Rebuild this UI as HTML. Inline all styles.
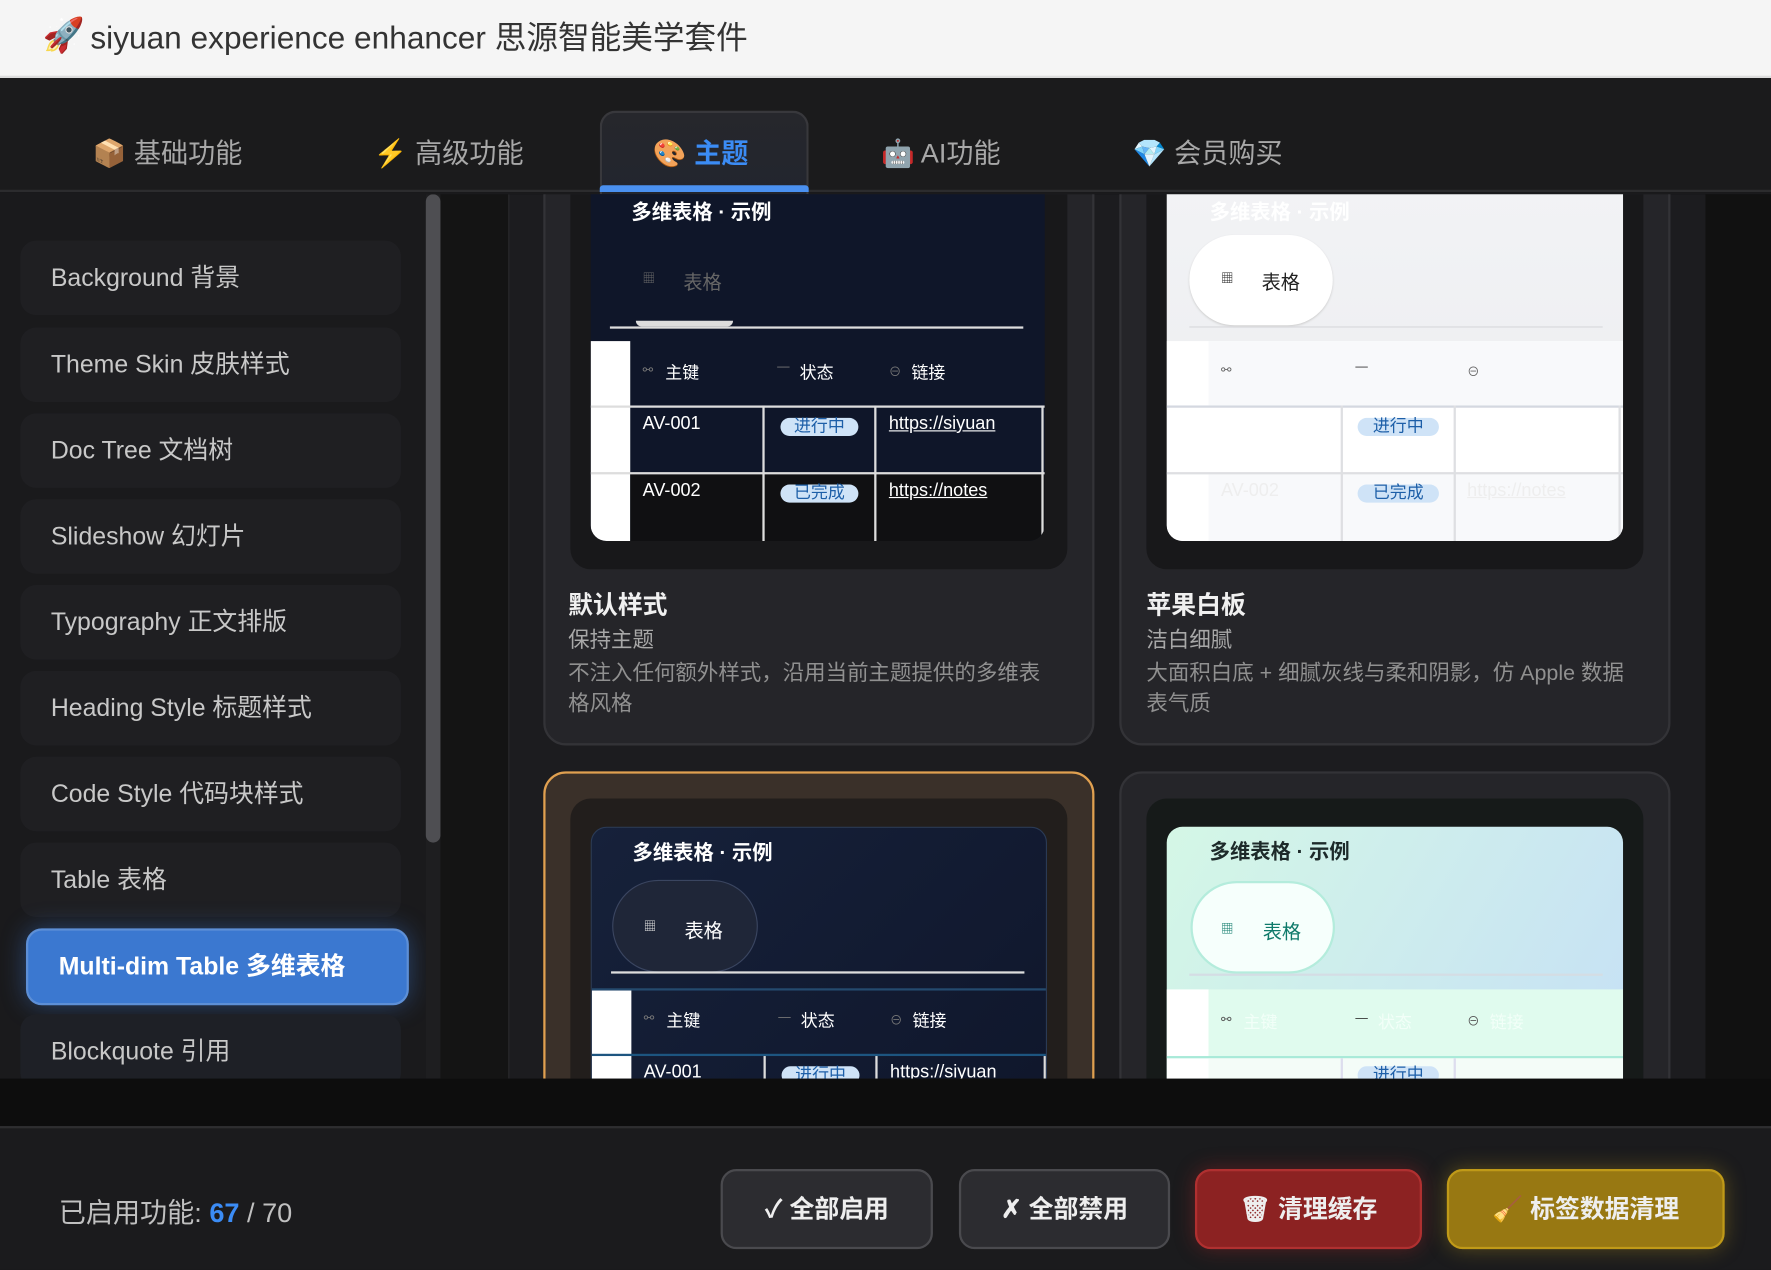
<!DOCTYPE html>
<html><head><meta charset="utf-8"><style>
*{box-sizing:border-box;margin:0;padding:0}
html,body{width:1771px;height:1269px;overflow:hidden;background:#1a1a1c}
body{font-family:"Liberation Sans","Noto Sans CJK SC",sans-serif}
#s{position:absolute;left:0;top:0;width:1568px;height:1124px;transform:scale(1.12946);transform-origin:0 0;background:#1a1a1c}
.a{position:absolute}
.hdr{left:0;top:0;width:1568px;height:69px;background:#f5f5f5;border-bottom:2px solid #ddd}
.tabs{left:0;top:70px;width:1568px;height:100px;background:#1b1b1c;border-bottom:2px solid #2c2c2e}
.tab{position:absolute;top:116px;font-size:24px;color:#a8a8a8;white-space:nowrap}
.side{left:0;top:172px;width:390px;height:783px;background:#1a1a1c;overflow:hidden}
.it{position:absolute;left:18px;width:337px;height:66px;border-radius:14px;background:#1f1f22;color:#c8c8c8;font-size:22px;padding-left:27px;line-height:66px;white-space:nowrap}
.main{left:390px;top:172px;width:1178px;height:783px;overflow:hidden;background:#141414}
.card{position:absolute;border-radius:20px;background:#252529;border:2px solid #333337}
.frame{position:absolute;border-radius:18px;background:#18181a}
.pv{position:absolute;overflow:hidden;border-radius:14px}
.t{position:absolute;white-space:nowrap}
.pill{position:absolute;height:16px;border-radius:8px;background:#cfe3f7;color:#1d5fa8;font-size:15px;line-height:16px;text-align:center}
</style></head><body><div id="s">
<div class="a hdr"></div>
<div class="a" style="left:38px;top:14px;font-size:30px">🚀</div>
<div class="a" style="left:80px;top:12px;font-size:28px;color:#333">siyuan experience enhancer 思源智能美学套件</div>

<div class="a tabs"></div>
<div class="a" style="left:531px;top:98px;width:185px;height:74px;border-radius:14px 14px 0 0;background:linear-gradient(#26272c,#22252e);border:2px solid #38383c;border-bottom:none"></div>
<div class="a" style="left:531px;top:164px;width:185px;height:6px;background:#4a90f0;border-radius:3px 3px 0 0"></div>
<div class="tab" style="left:82px">📦 基础功能</div>
<div class="tab" style="left:331px">⚡ 高级功能</div>
<div class="tab" style="left:578px;color:#3b8cf5;font-weight:bold">🎨 主题</div>
<div class="tab" style="left:780px">🤖 AI功能</div>
<div class="tab" style="left:1003px">💎 会员购买</div>

<div class="a side">
<div class="it" style="top:41px">Background 背景</div>
<div class="it" style="top:118px">Theme Skin 皮肤样式</div>
<div class="it" style="top:194px">Doc Tree 文档树</div>
<div class="it" style="top:270px">Slideshow 幻灯片</div>
<div class="it" style="top:346px">Typography 正文排版</div>
<div class="it" style="top:422px">Heading Style 标题样式</div>
<div class="it" style="top:498px">Code Style 代码块样式</div>
<div class="it" style="top:574px">Table 表格</div>
<div class="it" style="top:650px;left:23px;width:339px;height:68px;background:#3b78d0;border:2px solid #5d8fd6;color:#fff;font-weight:bold;line-height:64px;box-shadow:0 0 22px rgba(60,120,210,.45)">Multi-dim Table 多维表格</div>
<div class="it" style="top:726px;background:#1e2026">Blockquote 引用</div>
<div class="a" style="left:377px;top:0;width:13px;height:783px;background:#1e1e20"></div>
<div class="a" style="left:377px;top:0;width:13px;height:574px;border-radius:7px;background:#4e4e52"></div>
</div>

<div class="a main">
 <div class="a" style="left:60px;top:0;width:1060px;height:783px;background:#1c1c1f;border-left:1px solid #2a2a2c"></div>
 <!-- card1 -->
 <div class="card" style="left:91px;top:-60px;width:488px;height:548px">
  <div class="frame" style="left:22px;top:0;width:440px;height:390px">
   <div class="pv" style="left:18px;top:0;width:402px;height:365px;background:#0f1629;border-radius:0 0 14px 14px">
    <div class="t" style="left:36px;top:60px;font-size:18px;font-weight:bold;color:#fff">多维表格 · 示例</div>
    <div class="t" style="left:46px;top:124px;font-size:11px;color:#666">▦</div>
    <div class="t" style="left:82px;top:122px;font-size:17px;color:#666">表格</div>
    <div class="a" style="left:40px;top:170px;width:86px;height:5px;background:#ddd;border-radius:0 0 40px 40px"></div>
    <div class="a" style="left:17px;top:175px;width:366px;height:2px;background:#ddd"></div>
    <div class="a" style="left:0;top:188px;width:35px;height:177px;background:#fff"></div>
    <div class="t" style="left:46px;top:207px;font-size:11px;color:#777">⚯</div><div class="t" style="left:66px;top:205px;font-size:15px;color:#fff">主键</div>
    <div class="t" style="left:165px;top:205px;font-size:11px;color:#777">—</div><div class="t" style="left:185px;top:205px;font-size:15px;color:#fff">状态</div>
    <div class="t" style="left:264px;top:207px;font-size:11px;color:#777">⊖</div><div class="t" style="left:284px;top:205px;font-size:15px;color:#fff">链接</div>
    <div class="a" style="left:0;top:245px;width:402px;height:2px;background:#ddd"></div>
    <div class="a" style="left:35px;top:304px;width:367px;height:61px;background:#101012"></div>
    <div class="a" style="left:0;top:304px;width:402px;height:2px;background:#ddd"></div>
    <div class="a" style="left:152px;top:245px;width:2px;height:120px;background:#ddd"></div>
    <div class="a" style="left:251px;top:245px;width:2px;height:120px;background:#ddd"></div>
    <div class="a" style="left:399px;top:245px;width:2px;height:120px;background:#ddd"></div>
    <div class="t" style="left:46px;top:253px;font-size:16px;color:#fff">AV-001</div>
    <div class="pill" style="left:168px;top:256px;width:69px">进行中</div>
    <div class="t" style="left:264px;top:253px;font-size:16px;color:#fff;text-decoration:underline">https://siyuan</div>
    <div class="t" style="left:46px;top:312px;font-size:16px;color:#fff">AV-002</div>
    <div class="pill" style="left:168px;top:315px;width:69px">已完成</div>
    <div class="t" style="left:264px;top:312px;font-size:16px;color:#fff;text-decoration:underline">https://notes</div>
   </div>
  </div>
  <div class="t" style="left:20px;top:404px;font-size:22px;font-weight:bold;color:#f0f0f0">默认样式</div>
  <div class="t" style="left:20px;top:438px;font-size:19px;color:#a8a8a8">保持主题</div>
  <div class="a" style="left:20px;top:469px;width:432px;font-size:19px;color:#909090;line-height:27px">不注入任何额外样式，沿用当前主题提供的多维表格风格</div>
 </div>
 <!-- card2 -->
 <div class="card" style="left:601px;top:-60px;width:488px;height:548px">
  <div class="frame" style="left:22px;top:0;width:440px;height:390px">
   <div class="pv" style="left:18px;top:0;width:404px;height:365px;background:linear-gradient(#f3f4f6,#ebecef);border-radius:0 0 14px 14px">
    <div class="t" style="left:38px;top:60px;font-size:18px;font-weight:bold;color:#fff">多维表格 · 示例</div>
    <div class="a" style="left:20px;top:94px;width:127px;height:80px;border-radius:40px;background:#fff;box-shadow:0 1px 2px #ccc"></div>
    <div class="t" style="left:48px;top:124px;font-size:11px;color:#222">▦</div>
    <div class="t" style="left:84px;top:122px;font-size:17px;color:#222">表格</div>
    <div class="a" style="left:20px;top:175px;width:366px;height:1px;background:#d8d8dc"></div>
    <div class="a" style="left:0;top:188px;width:404px;height:177px;background:#fff"></div>
    <div class="a" style="left:37px;top:188px;width:367px;height:57px;background:#f8f9fb"></div>
    <div class="a" style="left:37px;top:306px;width:367px;height:59px;background:#f8f9fb"></div>
    <div class="t" style="left:48px;top:207px;font-size:11px;color:#666">⚯</div>
    <div class="t" style="left:167px;top:205px;font-size:11px;color:#333">—</div>
    <div class="t" style="left:266px;top:207px;font-size:11px;color:#666">⊖</div>
    <div class="a" style="left:0;top:245px;width:404px;height:2px;background:#d4d8e0"></div>
    <div class="a" style="left:0;top:304px;width:404px;height:2px;background:#dedfe2"></div>
    <div class="a" style="left:154px;top:245px;width:2px;height:120px;background:#dedfe2"></div>
    <div class="a" style="left:254px;top:245px;width:2px;height:120px;background:#dedfe2"></div>
    <div class="a" style="left:400px;top:245px;width:2px;height:120px;background:#dedfe2"></div>
    <div class="pill" style="left:169px;top:256px;width:72px">进行中</div>
    <div class="pill" style="left:169px;top:315px;width:72px">已完成</div>
    <div class="t" style="left:48px;top:312px;font-size:16px;color:#eee">AV-002</div>
    <div class="t" style="left:266px;top:312px;font-size:16px;color:#eee;text-decoration:underline">https://notes</div>
   </div>
  </div>
  <div class="t" style="left:22px;top:404px;font-size:22px;font-weight:bold;color:#f0f0f0">苹果白板</div>
  <div class="t" style="left:22px;top:438px;font-size:19px;color:#a8a8a8">洁白细腻</div>
  <div class="a" style="left:22px;top:469px;width:430px;font-size:19px;color:#909090;line-height:27px">大面积白底 + 细腻灰线与柔和阴影，仿 Apple 数据表气质</div>
 </div>
 <!-- card3 -->
 <div class="card" style="left:91px;top:511px;width:488px;height:400px;background:#3a3029;border-color:#e0a050">
  <div class="frame" style="left:22px;top:22px;width:440px;height:400px;background:#221e1c">
   <div class="pv" style="left:18px;top:25px;width:404px;height:400px;background:linear-gradient(135deg,#16213a,#0e1428);border:1px solid #2a3a55">
    <div class="t" style="left:36px;top:8px;font-size:18px;font-weight:bold;color:#fff">多维表格 · 示例</div>
    <div class="a" style="left:18px;top:46px;width:129px;height:82px;border-radius:41px;background:#1f2638;border:1px solid #3a4560"></div>
    <div class="t" style="left:46px;top:79px;font-size:11px;color:#ddd">▦</div>
    <div class="t" style="left:82px;top:77px;font-size:17px;color:#fff">表格</div>
    <div class="a" style="left:17px;top:127px;width:366px;height:2px;background:#ddd"></div>
    <div class="a" style="left:0;top:142px;width:404px;height:2px;background:#244a6e"></div>
    <div class="a" style="left:0;top:144px;width:35px;height:260px;background:#fff"></div>
    <div class="t" style="left:46px;top:162px;font-size:11px;color:#777">⚯</div><div class="t" style="left:66px;top:160px;font-size:15px;color:#fff">主键</div>
    <div class="t" style="left:165px;top:162px;font-size:11px;color:#777">—</div><div class="t" style="left:185px;top:160px;font-size:15px;color:#fff">状态</div>
    <div class="t" style="left:264px;top:162px;font-size:11px;color:#777">⊖</div><div class="t" style="left:284px;top:160px;font-size:15px;color:#fff">链接</div>
    <div class="a" style="left:0;top:200px;width:404px;height:2px;background:#1d5580"></div>
    <div class="a" style="left:152px;top:202px;width:2px;height:60px;background:#ddd"></div>
    <div class="a" style="left:251px;top:202px;width:2px;height:60px;background:#ddd"></div>
    <div class="a" style="left:400px;top:202px;width:2px;height:60px;background:#ddd"></div>
    <div class="t" style="left:46px;top:208px;font-size:16px;color:#fff">AV-001</div>
    <div class="pill" style="left:168px;top:211px;width:69px">进行中</div>
    <div class="t" style="left:264px;top:208px;font-size:16px;color:#fff">https://siyuan</div>
   </div>
  </div>
 </div>
 <!-- card4 -->
 <div class="card" style="left:601px;top:511px;width:488px;height:400px">
  <div class="frame" style="left:22px;top:22px;width:440px;height:400px;background:#161a19">
   <div class="pv" style="left:18px;top:25px;width:404px;height:400px;background:linear-gradient(120deg,#d4f7e6,#c3dcf8)">
    <div class="t" style="left:38px;top:8px;font-size:18px;font-weight:bold;color:#1d2a2a">多维表格 · 示例</div>
    <div class="a" style="left:21px;top:48px;width:128px;height:82px;border-radius:41px;background:#f6fffc;border:2px solid #b4ecdc"></div>
    <div class="t" style="left:48px;top:82px;font-size:11px;color:#0e7a6a">▦</div>
    <div class="t" style="left:85px;top:79px;font-size:17px;color:#0e7a6a">表格</div>
    <div class="a" style="left:20px;top:130px;width:366px;height:2px;background:#d4dde4"></div>
    <div class="a" style="left:0;top:144px;width:404px;height:260px;background:#e0fbee"></div>
    <div class="a" style="left:0;top:144px;width:37px;height:260px;background:#fff"></div>
    <div class="t" style="left:48px;top:164px;font-size:11px;color:#555">⚯</div><div class="t" style="left:68px;top:162px;font-size:15px;color:#f2fff8">主键</div>
    <div class="t" style="left:167px;top:164px;font-size:11px;color:#333">—</div><div class="t" style="left:187px;top:162px;font-size:15px;color:#f2fff8">状态</div>
    <div class="t" style="left:266px;top:164px;font-size:11px;color:#555">⊖</div><div class="t" style="left:286px;top:162px;font-size:15px;color:#f2fff8">链接</div>
    <div class="a" style="left:0;top:203px;width:404px;height:2px;background:#a8ead8"></div>
    <div class="a" style="left:37px;top:205px;width:367px;height:60px;background:#f4fcf8"></div>
    <div class="a" style="left:154px;top:205px;width:2px;height:60px;background:#dde"></div>
    <div class="a" style="left:254px;top:205px;width:2px;height:60px;background:#dde"></div>
    <div class="pill" style="left:169px;top:212px;width:72px">进行中</div>
   </div>
  </div>
 </div>
 <div class="a" style="left:1120px;top:0;width:58px;height:783px;background:#111"></div>
</div>

<div class="a" style="left:0;top:955px;width:1568px;height:42px;background:#0d0d0d"></div>
<div class="a" style="left:0;top:997px;width:1568px;height:127px;background:#1b1b1d;border-top:2px solid #2e2e30"></div>
<div class="a" style="left:52px;top:1054px;font-size:24px;color:#c0c0c0;white-space:nowrap">已启用功能: <span style="color:#3b8cf5;font-weight:bold">67</span> / 70</div>
<div class="a" style="left:638px;top:1035px;width:188px;height:71px;border-radius:14px;background:#2c2c30;border:2px solid #4a4a4e;color:#eee;font-size:22px;font-weight:bold;text-align:center;line-height:67px">✓ 全部启用</div>
<div class="a" style="left:849px;top:1035px;width:187px;height:71px;border-radius:14px;background:#2c2c30;border:2px solid #4a4a4e;color:#eee;font-size:22px;font-weight:bold;text-align:center;line-height:67px">✗ 全部禁用</div>
<div class="a" style="left:1058px;top:1035px;width:201px;height:71px;border-radius:14px;background:#8c2222;border:2px solid #b03030;color:#eee;font-size:22px;font-weight:bold;text-align:center;line-height:67px;box-shadow:0 0 18px rgba(200,40,40,.35)">🗑 清理缓存</div>
<div class="a" style="left:1281px;top:1035px;width:246px;height:71px;border-radius:14px;background:#987812;border:2px solid #c09a18;color:#eee;font-size:22px;font-weight:bold;text-align:center;line-height:67px;box-shadow:0 0 18px rgba(210,170,30,.35)">🧹 标签数据清理</div>
</div></body></html>
